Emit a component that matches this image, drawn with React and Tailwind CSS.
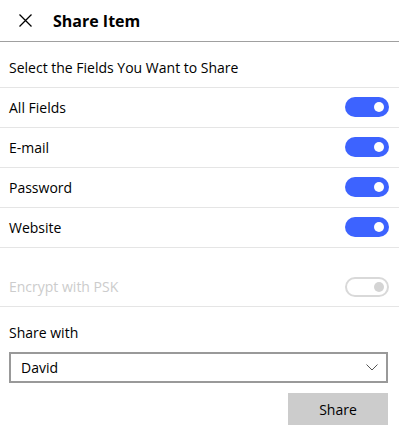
import React, { useState } from 'react';

function Toggle({ on, disabled }) {
    if (disabled) {
        return (
            <div className="w-[44px] h-[20px] rounded-full border-2 border-[#d9d9d9] flex items-center justify-end pr-[3px]">
                <div className="w-[10px] h-[10px] rounded-full bg-[#d4d4d4]" />
            </div>
        );
    }
    return (
        <div className={`w-[44px] h-[20px] rounded-full flex items-center justify-end pr-[5px] ${on ? 'bg-[#3d63ff]' : 'bg-gray-300'}`}>
            <div className="w-[10px] h-[10px] rounded-full bg-white" />
        </div>
    );
}

export default function App() {
    const [user] = useState('David');
    const fields = ['All Fields', 'E-mail', 'Password', 'Website'];

    return (
        <div className="w-[399px] h-[440px] bg-white text-black font-['Open_Sans',sans-serif] text-[14px]">
            {/* Header */}
            <div className="h-[42px] border-b border-[#a0a0a0] flex items-center">
                <svg className="ml-[19px] w-[13px] h-[13px]" viewBox="0 0 13 13" fill="none" stroke="#000" strokeWidth="1.3">
                    <path d="M0.5 0.5 L12.5 12.5 M12.5 0.5 L0.5 12.5" />
                </svg>
                <span className="ml-[21px] font-bold text-[16px] leading-none">Share Item</span>
            </div>

            <div className="h-[45px] flex items-center pl-[9px] pt-[6px]">
                Select the Fields You Want to Share
            </div>

            {fields.map((f) => (
                <div key={f} className="h-[40px] border-t border-[#e5e5e5] flex items-center justify-between pl-[9px] pr-[10px] pb-[1px]">
                    <span>{f}</span>
                    <Toggle on />
                </div>
            ))}
            <div className="border-t border-[#e5e5e5] h-[20px]" />

            <div className="h-[40px] border-b border-[#e5e5e5] flex items-center justify-between pl-[9px] pr-[10px] text-[#cccccc]">
                <span>Encrypt with PSK</span>
                <Toggle disabled />
            </div>

            <div className="h-[45px] flex items-center pl-[9px] pt-[5px]">Share with</div>

            <div className="px-[9px] pr-[11px]">
                <div className="h-[31px] border-2 border-[#999999] flex items-center justify-between pl-[10px] pr-[8px]">
                    <span>{user}</span>
                    <svg className="w-[12px] h-[7px]" viewBox="0 0 12 7" fill="none" stroke="#555" strokeWidth="1">
                        <path d="M0.5 0.5 L6 6 L11.5 0.5" />
                    </svg>
                </div>
                <div className="flex justify-end mt-[10px]">
                    <button className="w-[100px] h-[32px] bg-[#cccccc] text-black">Share</button>
                </div>
            </div>
        </div>
    );
}
